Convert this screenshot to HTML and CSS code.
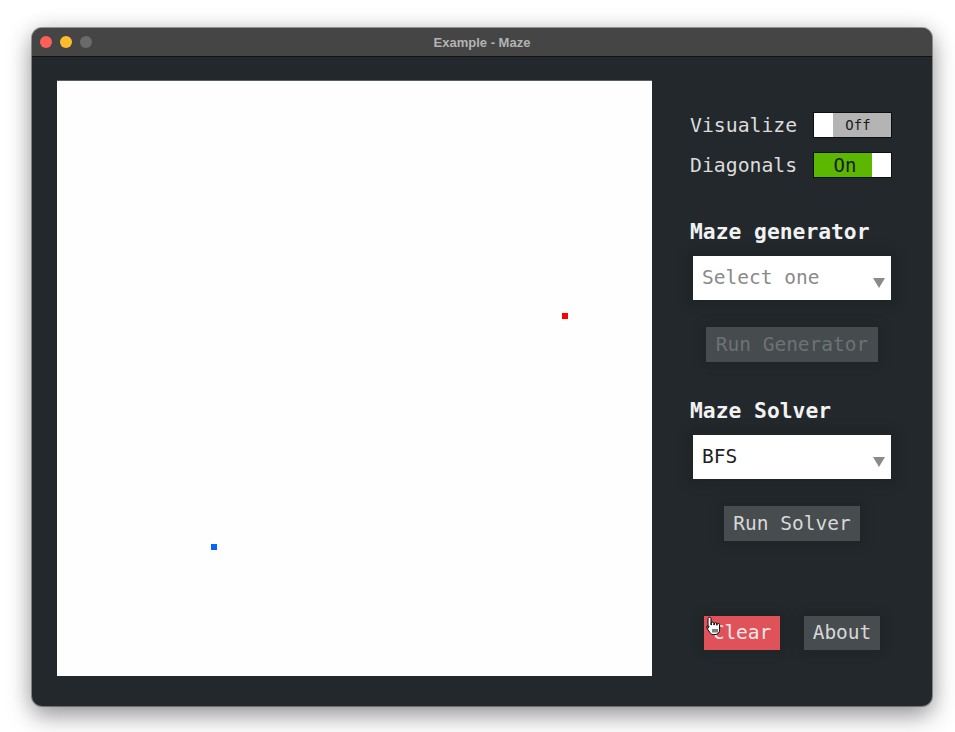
FILE: index.html
```html
<!DOCTYPE html>
<html>
<head>
<meta charset="utf-8">
<link rel="stylesheet" href="styles.css">
</head>
<body>
<div class="window">
  <div class="titlebar">
    <div class="lights">
      <span class="light red"></span>
      <span class="light yellow"></span>
      <span class="light grey"></span>
    </div>
    <div class="title">Example - Maze</div>
  </div>
  <div class="content">
    <div class="canvas">
      <span class="dot end" style="left:505px;top:232px"></span>
      <span class="dot start" style="left:154px;top:463px"></span>
    </div>
    <div class="panel">
      <div class="toggles">
        <div class="row">
          <span class="label">Visualize</span>
          <span class="toggle off"><span class="knob"></span><span class="state">Off</span></span>
        </div>
        <div class="row">
          <span class="label">Diagonals</span>
          <span class="toggle on"><span class="state">On</span><span class="knob"></span></span>
        </div>
      </div>
      <div class="heading gen">Maze generator</div>
      <div class="select placeholder"><span>Select one</span><span class="arrow"></span></div>
      <button class="btn disabled run-gen">Run Generator</button>
      <div class="heading solver">Maze Solver</div>
      <div class="select"><span>BFS</span><span class="arrow"></span></div>
      <button class="btn run-solver">Run Solver</button>
      <div class="actions">
        <button class="btn danger">Clear</button>
        <button class="btn">About</button>
        <svg class="cursor" width="16" height="20" viewBox="0 0 16 20">
          <path d="M3.5 1.2c.9 0 1.5.6 1.5 1.5V9h.3V7.4c0-.8.6-1.3 1.3-1.3s1.3.5 1.3 1.3V9h.3V8c0-.8.6-1.3 1.3-1.3s1.3.5 1.3 1.3v1.2h.3v-.6c0-.8.6-1.3 1.3-1.3s1.2.5 1.2 1.3v5.2c0 2.6-1.6 4.8-4.6 4.8H7.3c-1.7 0-2.6-.8-3.5-2.1L.9 12c-.5-.8-.3-1.6.3-2 .6-.4 1.400-.2 1.800.4L2 12.2V2.7c0-.9.6-1.5 1.5-1.5z" fill="#fff" stroke="#000" stroke-width="1"/>
          <path d="M7 13v3.5M9 13v3.5M11 13v3.5" stroke="#000" stroke-width="1"/>
        </svg>
      </div>
    </div>
  </div>
</div>
</body>
</html>
```
FILE: styles.css
```css
html, body {
  margin: 0;
  padding: 0;
  background: #ffffff;
}
body {
  width: 955px;
  height: 732px;
  overflow: hidden;
}
.window {
  margin: 28px 0 0 32px;
  width: 900px;
  height: 678px;
  border-radius: 10px;
  overflow: hidden;
  background: #22282b;
  box-shadow: 0 0 0 1px rgba(0,0,0,0.35), 0 10px 24px rgba(0,0,0,0.38), 0 0 22px rgba(0,0,0,0.12);
  display: flex;
  flex-direction: column;
}
.titlebar {
  height: 28px;
  background: #454545;
  border-bottom: 1px solid #121212;
  position: relative;
  display: flex;
  align-items: center;
  justify-content: center;
  flex-shrink: 0;
}
.lights {
  position: absolute;
  left: 8px;
  top: 8px;
  display: flex;
  gap: 8px;
}
.light {
  width: 12px;
  height: 12px;
  border-radius: 50%;
  display: block;
}
.light.red { background: #fe5f57; }
.light.yellow { background: #febc2e; }
.light.grey { background: #6a6a6a; }
.title {
  font-family: "Liberation Sans", Arial, sans-serif;
  font-weight: bold;
  font-size: 13px;
  color: #b3b3b3;
}
.content {
  flex: 1;
  display: flex;
}
.canvas {
  position: relative;
  margin: 23px 0 0 25px;
  width: 595px;
  height: 596px;
  background: #fefefe;
  border-top: 1px solid #5a5f62;
  box-sizing: border-box;
}
.dot {
  position: absolute;
  width: 6px;
  height: 6px;
}
.dot.end { background: #ff0000; }
.dot.start { background: #0066ff; }
.panel {
  flex: 1;
  display: flex;
  flex-direction: column;
  align-items: center;
  padding-top: 55px;
  font-family: "DejaVu Sans Mono", "Liberation Mono", monospace;
  position: relative;
}
.toggles {
  width: 202px;
  display: flex;
  flex-direction: column;
  gap: 14px;
  margin-left: -2px;
}
.row {
  display: flex;
  align-items: center;
  height: 26px;
}
.label {
  font-size: 19.8px;
  color: #dcdcdc;
  width: 123px;
}
.toggle {
  display: flex;
  width: 79px;
  height: 26px;
  box-sizing: border-box;
  border: 1px solid #0e0e0e;
}
.toggle .knob {
  width: 19px;
  background: #ffffff;
  flex-shrink: 0;
}
.toggle .state {
  flex: 1;
  display: flex;
  align-items: center;
  justify-content: center;
  color: #1a1a1a;
}
.toggle.off .state {
  background: #b4b4b4;
  font-size: 14px;
  padding-right: 8px;
}
.toggle.on .state {
  background: #5cb700;
  font-size: 19px;
  padding-left: 4px;
}
.heading {
  width: 202px;
  margin-left: -2px;
  font-size: 21.3px;
  line-height: 24px;
  font-weight: bold;
  color: #f2f2f2;
}
.heading.gen { margin-top: 42px; }
.heading.solver { margin-top: 37px; }
.select {
  margin-top: 12px;
  width: 198px;
  height: 44px;
  background: #ffffff;
  box-sizing: border-box;
  padding: 0 6px 0 9px;
  display: flex;
  align-items: center;
  justify-content: space-between;
  font-size: 19.5px;
  color: #1e1e1e;
  box-shadow: 0 0 12px 6px rgba(0,0,0,0.1);
}
.select > span:first-child { margin-top: -2px; }
.select.placeholder { color: #8a8a8a; }
.arrow {
  width: 0;
  height: 0;
  border-left: 6px solid transparent;
  border-right: 6px solid transparent;
  border-top: 10px solid #8a8a8a;
  margin-top: 10px;
}
.btn {
  font-family: "DejaVu Sans Mono", "Liberation Mono", monospace;
  font-size: 19.5px;
  height: 35px;
  border: none;
  background: #474c4f;
  color: #d8d8d8;
  padding: 0 8px;
  box-shadow: 0 0 10px 5px rgba(0,0,0,0.08);
  line-height: 35px;
}
.btn.disabled {
  color: #6d7275;
  background: #464b4e;
}
.run-gen { margin-top: 27px; width: 172px; }
.run-solver { margin-top: 27px; width: 136px; }
.actions {
  margin-top: 75px;
  display: flex;
  gap: 24px;
  position: relative;
}
.actions .btn {
  width: 76px;
  height: 34px;
  line-height: 34px;
  padding: 0;
}
.btn.danger {
  background: #e0525a;
  color: #f8e8e8;
}
.cursor {
  position: absolute;
  left: 2px;
  top: 0px;
}
```
